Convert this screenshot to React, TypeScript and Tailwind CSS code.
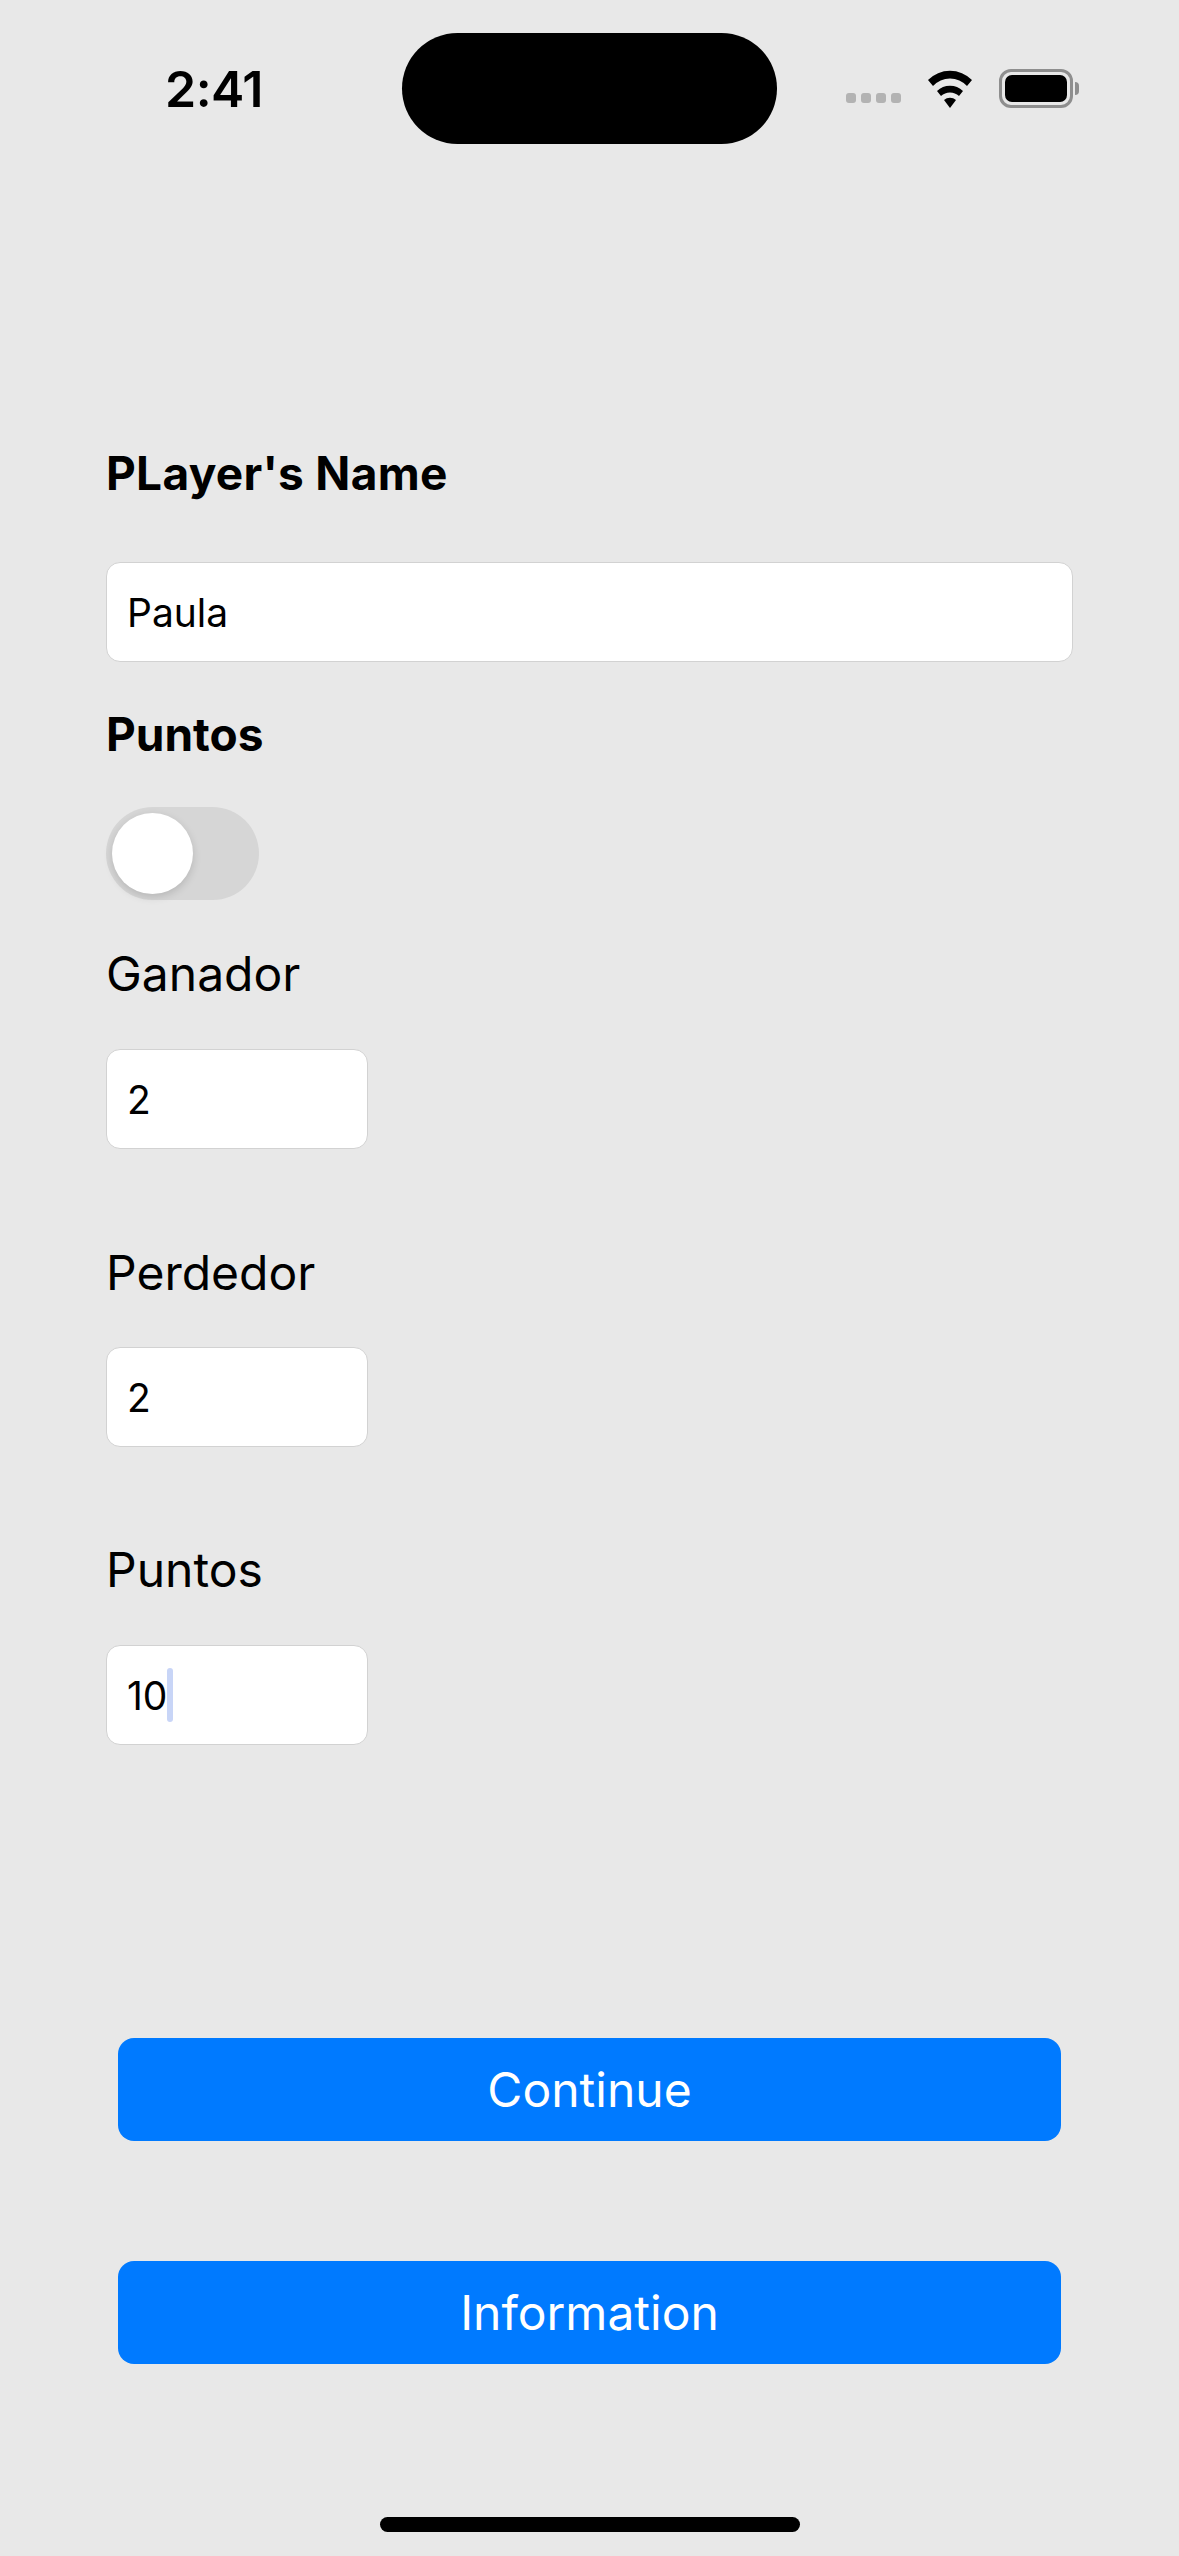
import { useState } from "react";

function StatusBar() {
  return (
    <div className="flex items-center pt-[33px] h-[144px]">
      <div className="w-[402px] pl-[165px]">
        <span className="text-[50px] leading-none font-semibold tracking-[-0.5px]">2:41</span>
      </div>
      <div className="w-[375px] h-[111px] rounded-full bg-black" />
      <div className="flex items-center pl-[69px]">
        <div className="flex gap-[5px] mt-[18px]">
          <div className="w-[10px] h-[10px] rounded-[3px] bg-[#b3b3b3]" />
          <div className="w-[10px] h-[10px] rounded-[3px] bg-[#b3b3b3]" />
          <div className="w-[10px] h-[10px] rounded-[3px] bg-[#b3b3b3]" />
          <div className="w-[10px] h-[10px] rounded-[3px] bg-[#b3b3b3]" />
        </div>
        <svg className="ml-[24px]" width="50" height="38" viewBox="0 0 50 38">
          <path d="M25 38 L19 30 A9 9 0 0 1 31 30 Z" fill="black" />
          <path d="M12 21 A19 19 0 0 1 38 21 L34 26 A13 13 0 0 0 16 26 Z" fill="black" />
          <path d="M3 10 A31 31 0 0 1 47 10 L42 16 A23 23 0 0 0 8 16 Z" fill="black" />
        </svg>
        <div className="ml-[24px] flex items-center">
          <div className="w-[74px] h-[39px] rounded-[12px] border-[3px] border-[#8e8e8e] p-[3px]">
            <div className="w-full h-full rounded-[7px] bg-black" />
          </div>
          <div className="w-[4px] h-[13px] rounded-r-full bg-[#8e8e8e] ml-[2px]" />
        </div>
      </div>
    </div>
  );
}

function Field({ value, wide, caret }: { value: string; wide?: boolean; caret?: boolean }) {
  return (
    <div
      className={
        (wide ? "w-full" : "w-[262px]") +
        " h-[100px] bg-white border border-[#d2d2d2] rounded-[14px] flex items-center pl-[20px]"
      }
    >
      <span className="text-[39px] leading-none text-black">{value}</span>
      {caret && <span className="w-[6px] h-[54px] rounded-[3px] bg-[#c8d5f7]" />}
    </div>
  );
}

function Toggle() {
  const [on, setOn] = useState(false);
  return (
    <button
      onClick={() => setOn(!on)}
      className={
        "w-[153px] h-[93px] rounded-full p-[6px] flex items-center " +
        (on ? "bg-[#34c759] justify-end" : "bg-[#d6d6d6] justify-start")
      }
    >
      <div className="w-[81px] h-[81px] rounded-full bg-white shadow-[0_3px_8px_rgba(0,0,0,0.15)]" />
    </button>
  );
}

export default function App() {
  return (
    <div className="w-[1179px] h-[2556px] bg-[#e8e8e8] text-black font-['Inter','Noto_Sans',sans-serif] flex flex-col">
      <StatusBar />

      <main className="px-[106px] flex flex-col pt-[306px]">
        <h2 className="text-[46px] leading-[46px] font-bold tracking-[0.3px]">PLayer's Name</h2>
        <div className="mt-[66px]">
          <Field value="Paula" wide />
        </div>

        <h2 className="mt-[49px] text-[46px] leading-[46px] font-bold">Puntos</h2>
        <div className="mt-[50px]">
          <Toggle />
        </div>

        <p className="mt-[49px] text-[48px] leading-[50px]">Ganador</p>
        <div className="mt-[50px]">
          <Field value="2" />
        </div>

        <p className="mt-[99px] text-[48px] leading-[50px]">Perdedor</p>
        <div className="mt-[49px]">
          <Field value="2" />
        </div>

        <p className="mt-[98px] text-[48px] leading-[50px]">Puntos</p>
        <div className="mt-[50px]">
          <Field value="10" caret />
        </div>
      </main>

      <div className="px-[118px] mt-[293px] flex flex-col gap-[120px]">
        <button className="h-[103px] rounded-[16px] bg-[#007aff] text-white text-[48px] leading-none">
          Continue
        </button>
        <button className="h-[103px] rounded-[16px] bg-[#007aff] text-white text-[48px] leading-none">
          Information
        </button>
      </div>

      <div className="mt-auto pb-[24px] flex justify-center">
        <div className="w-[420px] h-[15px] rounded-full bg-black" />
      </div>
    </div>
  );
}
